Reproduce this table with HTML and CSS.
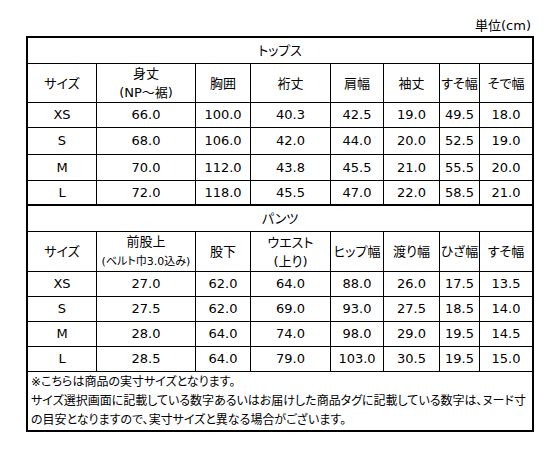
FILE: index.html
```html
<!DOCTYPE html>
<html lang="ja">

<head>
    <meta charset="UTF-8">
    <meta name="viewport" content="width=device-width, initial-scale=1.0">
    <title>サイズ表</title>
    <link rel="stylesheet" href="styles.css">
</head>

<body>
    <div class="sheet">
        <div class="unit">単位(cm)</div>

        <table class="size-table">
            <colgroup>
                <col class="c1">
                <col class="c2">
                <col class="c3">
                <col class="c4">
                <col class="c5">
                <col class="c6">
                <col class="c7">
                <col class="c8">
            </colgroup>

            <!-- トップス -->
            <tr class="title">
                <td colspan="8">トップス</td>
            </tr>
            <tr class="head">
                <td>サイズ</td>
                <td>身丈<br>(NP～裾)</td>
                <td>胸囲</td>
                <td>裄丈</td>
                <td>肩幅</td>
                <td>袖丈</td>
                <td>すそ幅</td>
                <td>そで幅</td>
            </tr>
            <tr class="row">
                <td>XS</td><td>66.0</td><td>100.0</td><td>40.3</td><td>42.5</td><td>19.0</td><td>49.5</td><td>18.0</td>
            </tr>
            <tr class="row tall">
                <td>S</td><td>68.0</td><td>106.0</td><td>42.0</td><td>44.0</td><td>20.0</td><td>52.5</td><td>19.0</td>
            </tr>
            <tr class="row mid">
                <td>M</td><td>70.0</td><td>112.0</td><td>43.8</td><td>45.5</td><td>21.0</td><td>55.5</td><td>20.0</td>
            </tr>
            <tr class="row last">
                <td>L</td><td>72.0</td><td>118.0</td><td>45.5</td><td>47.0</td><td>22.0</td><td>58.5</td><td>21.0</td>
            </tr>

            <!-- パンツ -->
            <tr class="title">
                <td colspan="8">パンツ</td>
            </tr>
            <tr class="head">
                <td>サイズ</td>
                <td>前股上<br><span class="small">(ベルト巾3.0込み)</span></td>
                <td>股下</td>
                <td>ウエスト<br>(上り)</td>
                <td>ヒップ幅</td>
                <td>渡り幅</td>
                <td>ひざ幅</td>
                <td>すそ幅</td>
            </tr>
            <tr class="row">
                <td>XS</td><td>27.0</td><td>62.0</td><td>64.0</td><td>88.0</td><td>26.0</td><td>17.5</td><td>13.5</td>
            </tr>
            <tr class="row">
                <td>S</td><td>27.5</td><td>62.0</td><td>69.0</td><td>93.0</td><td>27.5</td><td>18.5</td><td>14.0</td>
            </tr>
            <tr class="row">
                <td>M</td><td>28.0</td><td>64.0</td><td>74.0</td><td>98.0</td><td>29.0</td><td>19.5</td><td>14.5</td>
            </tr>
            <tr class="row">
                <td>L</td><td>28.5</td><td>64.0</td><td>79.0</td><td>103.0</td><td>30.5</td><td>19.5</td><td>15.0</td>
            </tr>

            <tr class="note">
                <td colspan="8">※こちらは商品の実寸サイズとなります。<br>サイズ選択画面に記載している数字あるいはお届けした商品タグに記載している数字は、ヌード寸<br>の目安となりますので、実寸サイズと異なる場合がございます。</td>
            </tr>
        </table>
    </div>
</body>

</html>
```

FILE: styles.css
```css
body {
    margin: 0;
    font-family: "DejaVu Sans", "Noto Sans CJK JP", sans-serif;
    font-size: 13px;
    color: #000;
    background-color: #fff;
    font-feature-settings: "palt";
}

.sheet {
    width: 508px;
    margin-left: 26px;
}

.unit {
    height: 36px;
    box-sizing: border-box;
    padding-top: 16px;
    padding-right: 3px;
    line-height: 19px;
    text-align: right;
}

.size-table {
    width: 508px;
    table-layout: fixed;
    border-collapse: separate;
    border-spacing: 0;
    border: 2px solid #000;
}

.size-table td {
    box-sizing: border-box;
    padding: 0;
    border-right: 1px solid #000;
    border-bottom: 1px solid #000;
    text-align: center;
    vertical-align: middle;
    line-height: 16px;
    white-space: nowrap;
}

.size-table td:last-child {
    border-right: none;
}

.c1 { width: 69px; }
.c2 { width: 99px; }
.c3 { width: 55px; }
.c4 { width: 80px; }
.c5 { width: 53px; }
.c6 { width: 56px; }
.c7 { width: 40px; }
.c8 { width: 52px; }

.title td {
    height: 26px;
}

.head td {
    height: 39px;
    line-height: 19px;
}

.row td {
    height: 25px;
}

.row.tall td {
    height: 27px;
}

.row.mid td {
    height: 26px;
}

.row.last td {
    border-bottom-width: 2px;
}

.head .small {
    font-size: 11px;
}

.note td {
    height: 55px;
    text-align: left;
    vertical-align: top;
    padding-left: 3px;
    padding-top: 1px;
    font-size: 12px;
    line-height: 19px;
    border-bottom: none;
}
```
